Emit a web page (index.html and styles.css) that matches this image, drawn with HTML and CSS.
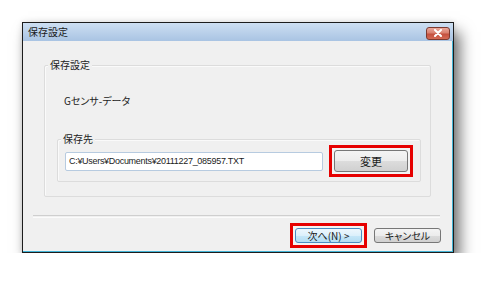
FILE: index.html
```html
<!DOCTYPE html>
<html lang="ja">
<head>
<meta charset="utf-8">
<title>保存設定</title>
<link rel="stylesheet" href="styles.css">
</head>
<body>
<div class="dialog">
  <div class="titlebar">
    <span class="title">保存設定</span>
    <span class="close"><svg width="10" height="8" viewBox="0 0 10 8"><path d="M2 1 L8 7 M8 1 L2 7" stroke="#fff" stroke-width="2" stroke-linecap="round"/></svg></span>
  </div>
  <div class="group outer">
    <span class="legend">保存設定</span>
    <div class="kind">Gセンサ-データ</div>
    <div class="group inner">
      <span class="legend">保存先</span>
      <div class="row">
        <div class="input">C:¥Users¥Documents¥20111227_085957.TXT</div>
        <div class="mark big"><div class="btn tall">変更</div></div>
      </div>
    </div>
  </div>
  <div class="sep"></div>
  <div class="actions">
    <div class="mark"><div class="btn default">次へ(N) &gt;</div></div>
    <div class="btn">キャンセル</div>
  </div>
</div>
</body>
</html>
```
FILE: styles.css
```css
html, body {
  margin: 0;
  background: #ffffff;
}
body {
  padding: 22px 0 0 22px;
  font-family: "Noto Sans CJK JP", "Noto Sans", sans-serif;
  font-feature-settings: "palt";
  font-size: 10px;
  color: #222;
}
.dialog {
  width: 432px;
  box-sizing: border-box;
  border: 1px solid #1c1c1c;
  background: #f0f0f0;
  box-shadow: inset -1px -1px 0 #43b4d6, 6px 10px 14px rgba(0,0,0,.55), 0 0 6px rgba(0,0,0,.12);
  display: flex;
  flex-direction: column;
  padding-bottom: 4px;
}
.titlebar {
  height: 18px;
  display: flex;
  align-items: center;
  justify-content: space-between;
  padding: 0 3px 0 5px;
  background: linear-gradient(#cddff2, #a9c4e3);
}
.title {
  font-size: 10px;
  line-height: 12px;
  color: #1a1a1a;
}
.close {
  width: 22px;
  height: 11px;
  margin-top: 2px;
  border: 1px solid #7c3a30;
  border-radius: 3px;
  background: linear-gradient(#eaa89b 0%, #d9806f 45%, #c4503e 55%, #d46a55 100%);
  display: flex;
  align-items: center;
  justify-content: center;
}
.group {
  position: relative;
  border: 1px solid #dcdcdc;
  box-shadow: inset 1px 1px 0 #fafafa;
  border-radius: 2px;
}
.legend {
  position: absolute;
  top: -8px;
  left: 3px;
  padding: 0 2px;
  line-height: 14px;
  background: #f0f0f0;
}
.outer {
  margin: 24px 22px 0 21px;
  height: 132px;
  box-sizing: border-box;
  padding: 28px 9px 0 12px;
}
.kind {
  margin-left: 7px;
  line-height: 14px;
  height: 14px;
}
.inner {
  margin-top: 31px;
  padding: 5px 7px 4px 7px;
}
.row {
  display: flex;
  align-items: center;
  gap: 6px;
}
.input {
  width: 259px;
  height: 19px;
  box-sizing: border-box;
  border: 1px solid #b7cbe0;
  border-radius: 2px;
  background: #fff;
  padding-left: 3px;
  font-family: "Liberation Sans", sans-serif;
  font-size: 9px;
  letter-spacing: -0.3px;
  line-height: 17px;
  color: #222;
}
.mark {
  border: 3px solid #e60000;
  padding: 2px;
  background: #f3f3f3;
}
.btn {
  width: 67px;
  height: 15px;
  box-sizing: border-box;
  border: 1px solid #777;
  border-radius: 3px;
  background: linear-gradient(#f4f4f4 0%, #ececec 50%, #dcdcdc 52%, #d0d0d0 100%);
  display: flex;
  align-items: center;
  justify-content: center;
  font-size: 10px;
  line-height: 12px;
  color: #1a1a1a;
}
.btn.tall {
  width: 74px;
  height: 22px;
  font-size: 11px;
}
.btn.default {
  border-color: #4a8cc2;
  background: linear-gradient(#eef7fd 0%, #dcf0fb 50%, #c6e7f8 52%, #b3ddf3 100%);
}
.sep {
  margin: 18px 13px 0 10px;
  height: 1px;
  border-top: 1px solid #cfcfcf;
  border-bottom: 1px solid #fbfbfb;
}
.actions {
  margin-top: 5px;
  display: flex;
  justify-content: flex-end;
  align-items: center;
  gap: 7px;
  padding-right: 12px;
}
```
